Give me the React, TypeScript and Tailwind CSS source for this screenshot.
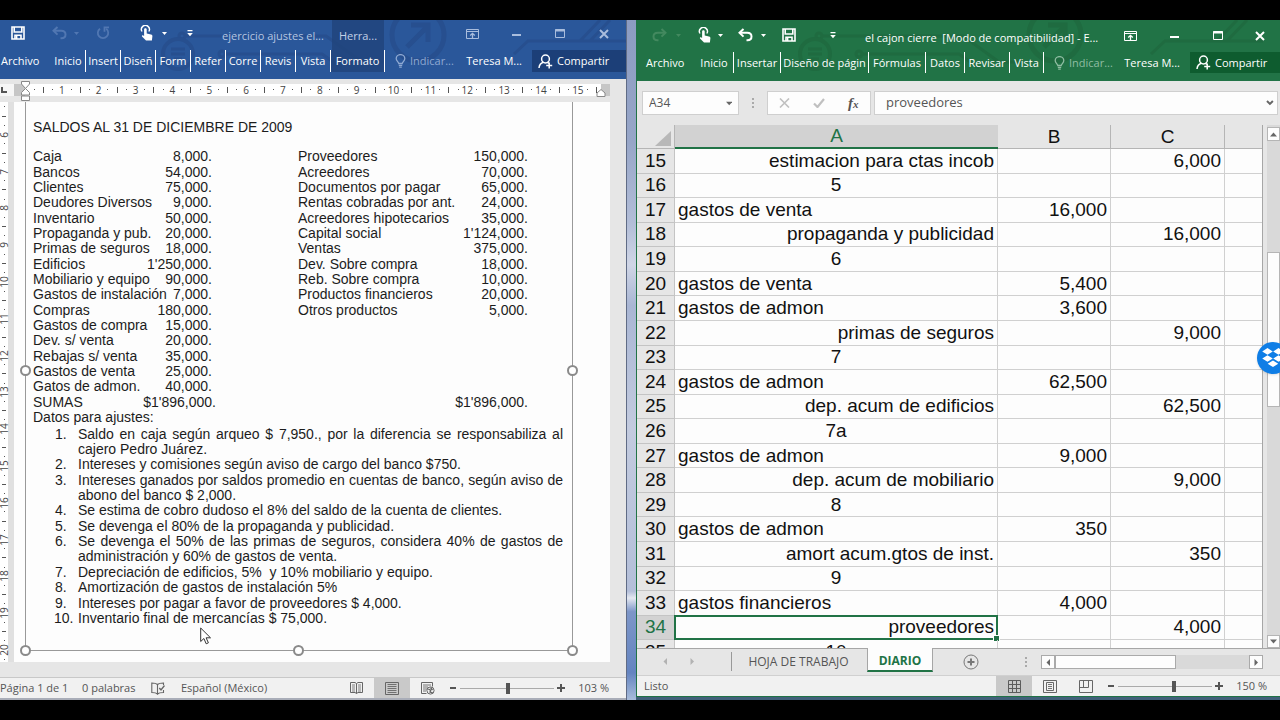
import type { ReactNode } from 'react';

/* ---------- icons ---------- */

const SaveIcon = () => (
  <svg width="14" height="14" viewBox="0 0 14 14" fill="none" stroke="currentColor" strokeWidth="1.6">
    <path d="M1 1h12v12H1z" />
    <path d="M3.2 1v5h7.6V1" />
    <path d="M4 13V9.2h6V13" />
    <path d="M5.6 10v3" />
  </svg>
);

const UndoIcon = ({ flip = false }: { flip?: boolean }) => (
  <svg width="15" height="14" viewBox="0 0 15 14" fill="none" stroke="currentColor" strokeWidth="2" className={flip ? '-scale-x-100' : ''}>
    <path d="M5.5 1L1.5 4.8l4 3.8" />
    <path d="M2 4.8h7.2c2.600 0 4.300 1.500 4.300 3.700S11.800 12.200 9.500 12.200H8.500" />
  </svg>
);

const RepeatIcon = () => (
  <svg width="14" height="14" viewBox="0 0 14 14" fill="none" stroke="currentColor" strokeWidth="1.8">
    <path d="M4 2.700A5.200 5.200 0 1 0 10.200 2.800" />
    <path d="M8.500 5.800V1.300H13" />
  </svg>
);

const TouchIcon = () => (
  <svg width="14" height="16" viewBox="0 0 14 16" fill="none">
    <path d="M2 6.500A4 4 0 1 1 8.800 6.500" stroke="currentColor" strokeWidth="1.400" />
    <path d="M4.100 4.500c0-1.700 2.600-1.700 2.600 0v4l4.300.9c1 .2 1.500.8 1.400 1.800l-.5 4.300H6L2 11.500c-.5-.9.500-1.700 1.300-1.100l.8.700z" fill="currentColor" />
  </svg>
);

const Caret = () => (
  <svg width="5" height="3" viewBox="0 0 5 3" fill="currentColor"><path d="M0 0h5L2.500 3z" /></svg>
);

const CustomizeIcon = () => (
  <svg width="6" height="7" viewBox="0 0 6 7" fill="currentColor"><path d="M.5 0h5v1.200h-5zM.2 3h5.600L3 6.300z" /></svg>
);

const RibbonIcon = () => (
  <svg width="13" height="10" viewBox="0 0 13 10" fill="none" stroke="currentColor">
    <path d="M.5.5h12v9H.5z M.5 2.500h12" />
    <path d="M6.500 9V4.500M4.200 6.500l2.300-2.200 2.300 2.200" strokeWidth="1.300" />
  </svg>
);

const MinimizeIcon = () => (
  <svg width="9" height="9" viewBox="0 0 9 9" fill="currentColor"><path d="M0 5h9v2H0z" /></svg>
);

const MaximizeIcon = () => (
  <svg width="10" height="9" viewBox="0 0 10 9" fill="none" stroke="currentColor">
    <path d="M.5.5h9v8h-9z" /><path d="M0 1.500h10" strokeWidth="2" />
  </svg>
);

const CloseIcon = () => (
  <svg width="10" height="10" viewBox="0 0 10 10" fill="none" stroke="currentColor" strokeWidth="2"><path d="M1 1l8 8M9 1L1 9" /></svg>
);

const BulbIcon = () => (
  <svg width="11" height="14" viewBox="0 0 11 14" fill="none" stroke="currentColor" strokeWidth="1.300">
    <path d="M3.800 9.500C3.600 7.800 1.200 7 1.200 4.600a4.300 4 0 0 1 8.600 0c0 2.400-2.400 3.200-2.600 4.900z" />
    <path d="M3.800 11.300h3.400M4.200 13.200h2.600" />
  </svg>
);

const ShareIcon = () => (
  <svg width="15" height="15" viewBox="0 0 15 15" fill="none" stroke="currentColor" strokeWidth="1.500">
    <circle cx="7.500" cy="5" r="3.900" />
    <path d="M1 14c.3-3 2-5 4.300-5.700M9.500 8.300l1.500 1" />
    <path d="M11.200 8.500v6M8.200 11.500h6" />
  </svg>
);

const ProofIcon = () => (
  <svg width="14" height="13" viewBox="0 0 14 13" fill="none" stroke="#666" strokeWidth="1.100">
    <path d="M6.500 2.500C5 1 3 1 .8 1v9.500c2.200 0 4.200 0 5.700 1.500V2.500C7.500 1.500 9 1 12.500 1v2M6.500 12c1.200-1.200 3-1.500 6-1.500V8" />
    <path d="M8.300 6l1.700 2 3.500-4.500" strokeWidth="1.400" />
  </svg>
);

const ReadIcon = () => (
  <svg width="13" height="12" viewBox="0 0 13 12" fill="none" stroke="#666">
    <path d="M.5.5h4.500l1.500 1 1.500-1h4.500v10H8l-1.500 1-1.500-1H.5zM6.500 1.500v10" />
    <path d="M2 3h3M2 5h3M2 7h3M2 9h3M8 3h3M8 5h3M8 7h3M8 9h3" strokeWidth=".8" />
  </svg>
);

const PrintLayoutIcon = () => (
  <svg width="14" height="13" viewBox="0 0 14 13" fill="none" stroke="#666">
    <path d="M.5.500h13v12H.5z" />
    <path d="M2.500 2.500h9M2.500 4.500h9M2.500 6.500h9M2.500 8.500h9M2.500 10.500h9" strokeWidth=".9" />
  </svg>
);

const WebIcon = () => (
  <svg width="14" height="13" viewBox="0 0 14 13" fill="none" stroke="#666">
    <path d="M5.500 11.500H.5V.5h11v4" /><path d="M2 3h8M2 5h5M2 7h4M2 9h3" strokeWidth=".9" />
    <circle cx="9.500" cy="8.500" r="3.600" fill="#f1f1f1" /><path d="M7.200 7l2.500 1.200L9 10l2.800.8M9.500 5.500L11.500 8" strokeWidth="1.300" />
  </svg>
);

const GridIcon = () => (
  <svg width="13" height="13" viewBox="0 0 13 13" fill="none" stroke="#5c5c5c">
    <path d="M.5.500h12v12H.5zM.5 4.500h12M.5 8.500h12M4.500.5v12M8.500.5v12" />
  </svg>
);

const PageViewIcon = () => (
  <svg width="14" height="13" viewBox="0 0 14 13" fill="none" stroke="#666">
    <path d="M.5.500h13v12H.5zM3.500 2.500h7v8h-7z" /><path d="M5 4.500h4M5 6.500h4M5 8.500h4" strokeWidth=".9" />
  </svg>
);

const BreakViewIcon = () => (
  <svg width="14" height="13" viewBox="0 0 14 13" fill="none" stroke="#666">
    <path d="M.5.500h13v12H.5zM4.500.5v7M9.500.5v7M.5 7.500h9" />
  </svg>
);

const Circuit = ({ color }: { color: string }) => (
  <svg className="pointer-events-none absolute top-0 left-0" width="626" height="59" viewBox="0 0 626 59" fill="none" stroke={color} strokeWidth="3">
    <g transform="translate(23 1)">
      <circle cx="159" cy="15" r="3" />
      <path d="M163 15h140l36 26h22" />
      <circle cx="176" cy="33" r="0" />
    </g>
    <circle cx="200" cy="34" r="15" strokeWidth="4" className="hidden" />
    <circle cx="178" cy="34" r="15" strokeWidth="4" />
    <path d="M171 29h14M171 34h14M174 39h8" />
    <circle cx="222" cy="34" r="3" />
    <path d="M226 34h96l20 14" />
    <circle cx="418" cy="15" r="26" strokeWidth="5" />
    <path d="M407 27l20-20M411 5h17v17" strokeWidth="5" />
    <path d="M514 34l14-13h98M580 21l20-21M590 21l20-21" />
  </svg>
);

/* ---------- shared pieces ---------- */

function IconButton({ label, className, children }: { label: string; className: string; children: ReactNode }) {
  return (
    <button type="button" aria-label={label} className={`flex shrink-0 items-center justify-center ${className}`}>
      {children}
    </button>
  );
}

function Tab({ className, children }: { className: string; children: ReactNode }) {
  return (
    <button type="button" className={`flex shrink-0 items-center justify-center border-r border-white whitespace-nowrap ${className}`}>
      {children}
    </button>
  );
}

function Zoom({ label, value, text }: { label: string; value: number; text: string }) {
  return (
    <>
      <button type="button" aria-label="Alejar" className="flex h-full w-3.5 items-center justify-center">
        <span className="h-0.5 w-1.5 bg-[#555]" />
      </button>
      <input
        type="range"
        aria-label={label}
        defaultValue={value}
        className="h-3 w-[94px] appearance-none bg-[linear-gradient(#aaa,#aaa)] bg-[length:100%_1px] bg-center bg-no-repeat [&::-webkit-slider-thumb]:h-[11px] [&::-webkit-slider-thumb]:w-1 [&::-webkit-slider-thumb]:appearance-none [&::-webkit-slider-thumb]:bg-[#555]"
      />
      <button type="button" aria-label="Acercar" className="flex h-full w-3.5 items-center justify-center">
        <svg width="8" height="8" viewBox="0 0 8 8" stroke="#555" strokeWidth="2"><path d="M4 0v8M0 4h8" /></svg>
      </button>
      <span className="ml-2.5 whitespace-nowrap">{text}</span>
    </>
  );
}

/* ---------- word window ---------- */

const ledger: [string, string, string, string][] = [
  ['Caja', '8,000.', 'Proveedores', '150,000.'],
  ['Bancos', '54,000.', 'Acreedores', '70,000.'],
  ['Clientes', '75,000.', 'Documentos por pagar', '65,000.'],
  ['Deudores Diversos', '9,000.', 'Rentas cobradas por ant.', '24,000.'],
  ['Inventario', '50,000.', 'Acreedores hipotecarios', '35,000.'],
  ['Propaganda y pub.', '20,000.', 'Capital social', "1'124,000."],
  ['Primas de seguros', '18,000.', 'Ventas', '375,000.'],
  ['Edificios', "1'250,000.", 'Dev. Sobre compra', '18,000.'],
  ['Mobiliario y equipo', '90,000.', 'Reb. Sobre compra', '10,000.'],
  ['Gastos de instalación', '7,000.', 'Productos financieros', '20,000.'],
  ['Compras', '180,000.', 'Otros productos', '5,000.'],
  ['Gastos de compra', '15,000.', '', ''],
  ['Dev. s/ venta', '20,000.', '', ''],
  ['Rebajas s/ venta', '35,000.', '', ''],
  ['Gastos de venta', '25,000.', '', ''],
  ['Gatos de admon.', '40,000.', '', ''],
  ['SUMAS', "$1'896,000.", '', "$1'896,000."],
];

const adjustments: string[][] = [
  ['Saldo en caja según arqueo $ 7,950., por la diferencia se responsabiliza al', 'cajero Pedro Juárez.'],
  ['Intereses y comisiones según aviso de cargo del banco $750.'],
  ['Intereses ganados por saldos promedio en cuentas de banco, según aviso de', 'abono del banco $ 2,000.'],
  ['Se estima de cobro dudoso el 8% del saldo de la cuenta de clientes.'],
  ['Se devenga el 80% de la propaganda y publicidad.'],
  ['Se devenga el 50% de las primas de seguros, considera 40% de gastos de', 'administración y 60% de gastos de venta.'],
  ['Depreciación de edificios, 5%  y 10% mobiliario y equipo.'],
  ['Amortización de gastos de instalación 5%'],
  ['Intereses por pagar a favor de proveedores $ 4,000.'],
  ['Inventario final de mercancías $ 75,000.'],
];

const wordTabs = ['Inicio', 'Insert', 'Diseñ', 'Form', 'Refer', 'Corre', 'Revis', 'Vista'];
const marks = Array.from({ length: 15 }, (_, i) => i + 1);

const Dot = () => <span className="size-px bg-[#555]" />;

function Handle({ className }: { className: string }) {
  return <span className={`absolute size-[11px] rounded-full border-2 border-[#8a8a8a] bg-white ${className}`} />;
}

function WordWindow() {
  return (
    <section className="flex min-w-0 flex-col overflow-hidden border-b-2 border-[#a9adb8] bg-[#e6e6e6]">
      <header className="relative overflow-hidden bg-[#2a579a] pb-[7px] text-[11px] text-white">
        <Circuit color="#274f8f" />
        <div className="relative flex h-[30px]">
          <div className="flex h-[26px] items-center">
            <IconButton label="Guardar" className="w-9"><SaveIcon /></IconButton>
            <IconButton label="Deshacer" className="ml-[11px] w-6 text-[#5177b2]"><UndoIcon /></IconButton>
            <IconButton label="Más deshacer" className="w-2.5 text-[#5177b2]"><Caret /></IconButton>
            <IconButton label="Repetir" className="ml-2.5 w-6 text-[#5177b2]"><RepeatIcon /></IconButton>
            <IconButton label="Modo táctil" className="ml-5 w-6"><TouchIcon /></IconButton>
            <IconButton label="Más modos" className="w-2.5"><Caret /></IconButton>
            <IconButton label="Personalizar" className="ml-[13px] w-4"><CustomizeIcon /></IconButton>
          </div>
          <h1 className="ml-6 w-[110px] shrink-0 pt-2 leading-4 whitespace-nowrap text-[#b4c6e2]">ejercicio ajustes el...</h1>
          <div className="w-[52px] shrink-0 bg-[#20437a]/80 pt-2 text-center leading-4 text-[#c3d0e6]">Herra...</div>
          <div className="ml-auto flex h-[27px] text-[#a9bddd]">
            <IconButton label="Opciones de cinta" className="w-11"><RibbonIcon /></IconButton>
            <IconButton label="Minimizar" className="w-11"><MinimizeIcon /></IconButton>
            <IconButton label="Maximizar" className="w-11"><MaximizeIcon /></IconButton>
            <IconButton label="Cerrar" className="w-11"><CloseIcon /></IconButton>
          </div>
        </div>
        <nav className="relative flex h-[22px] leading-[22px]">
          <button type="button" className="w-[51px] shrink-0 pr-2.5 pl-px text-left">Archivo</button>
          {wordTabs.map((t) => (
            <Tab key={t} className="w-[35px]">{t}</Tab>
          ))}
          <Tab className="w-[54px] bg-[#20437a]/80">Formato</Tab>
          <button type="button" className="ml-2.5 flex shrink-0 items-center gap-1 text-[#8ea9d2]"><BulbIcon />Indicar...</button>
          <button type="button" className="ml-auto shrink-0 pr-2.5">Teresa M...</button>
          <button type="button" className="flex w-[94px] shrink-0 items-center gap-1 bg-[#1c3f78] pl-1.5 font-medium"><ShareIcon />Compartir</button>
        </nav>
      </header>

      <div className="relative flex h-[23px] items-center pb-0.5 text-[10px] text-[#444]">
        <span className="flex h-3 w-[14px] items-center bg-[#f6f6f6] pl-px">
          <svg width="6" height="6" viewBox="0 0 6 6" fill="none" stroke="#555" strokeWidth="2"><path d="M1 0v5h5" /></svg>
        </span>
        <span className="h-3 w-[11px] bg-[#c6c6c6]" />
        <div className="flex h-3 min-w-0 flex-1 bg-white pl-[5px]">
          <div className="grid w-[18px] grid-cols-2 place-items-center"><Dot /><span className="h-1.5 w-px bg-[#555]" /></div>
          <div className="flex min-w-0 flex-1">
            {marks.map((n) => (
              <div key={n} className="grid min-w-0 flex-1 grid-cols-4 place-items-center leading-3">
                <Dot /><span className="flex w-0 justify-center">{n}</span><Dot /><span className="h-1.5 w-px bg-[#555]" />
              </div>
            ))}
          </div>
        </div>
        <span className="mr-4 h-3 w-[9px] bg-[#c6c6c6]" />
        <svg className="absolute top-0.5 left-5 z-10" width="11" height="21" viewBox="0 0 11 21" fill="#fff" stroke="#888">
          <path d="M1.500.5h8v2.500l-4 4.500-4-4.500z" /><path d="M5.500 7.500l4 4v2.500h-8v-2.500z" /><path d="M1.500 15h8v4.500h-8z" />
        </svg>
        <svg className="absolute top-2.5 right-5" width="10" height="8" viewBox="0 0 10 8" fill="#fff" stroke="#888"><path d="M5 .5l4 3.500v3.500H1V4z" /></svg>
      </div>

      <div className="flex">
        <div className="h-0 min-h-full w-[14px] shrink-0 overflow-hidden bg-[#e0e0e0] text-[10px] text-[#444]">
          <div className="flex w-2 flex-col bg-white">
            <div className="grid h-[19px] grid-rows-2 place-items-center"><Dot /><span className="h-px w-1 bg-[#555]" /></div>
            <div className="flex h-[552px] flex-col">
              {marks.map((n) => (
                <div key={n} className="grid min-h-0 flex-1 grid-rows-4 place-items-center">
                  <Dot /><span className="flex size-0 -rotate-90 items-center justify-center">{n + 5}</span><Dot /><span className="h-px w-1 bg-[#555]" />
                </div>
              ))}
            </div>
          </div>
        </div>

        <article className="mr-4 min-w-0 flex-1 bg-[#fdfdfd] pr-[37px] pb-[11px] pl-[11px] font-['Liberation_Sans',Arial,sans-serif] text-[14px] leading-[15px] text-[#1c1c1c]">
          <div className="relative border-x border-b border-[#999] pt-[18px] pr-[9px] pb-6 pl-[7px]">
            <h2>SALDOS AL 31 DE DICIEMBRE DE 2009</h2>
            <table className="mt-3.5 h-[261px] table-fixed whitespace-nowrap">
              <colgroup>
                <col className="w-[110px]" /><col className="w-[69px]" /><col className="w-[243px]" /><col className="w-[70px]" />
              </colgroup>
              <tbody>
                {ledger.map(([a, b, c, d]) => (
                  <tr key={a}>
                    <td className="max-w-[110px] p-0">{a}</td>
                    <td className="p-0 text-right">
                      <span className={a === 'SUMAS' ? '-mr-1' : ''}>{b}</span>
                    </td>
                    <td className="p-0 pl-[86px]">{c}</td>
                    <td className="p-0 text-right">{d}</td>
                  </tr>
                ))}
              </tbody>
            </table>
            <p>Datos para ajustes:</p>
            <ol className="mt-0.5 flex h-[199px] flex-col justify-between pl-[21px]">
              {adjustments.map((lines, i) => (
                <li key={lines[0]} className="flex">
                  <span className={i === 9 ? 'w-6 shrink-0' : 'w-6 shrink-0 pl-px'}>{i + 1}.</span>
                  <div className="min-w-0 flex-1">
                    {lines.map((l, k) => (
                      <span key={l} className={lines.length > 1 && k === 0 ? 'block [text-align-last:justify]' : 'block whitespace-pre'}>{l}</span>
                    ))}
                  </div>
                </li>
              ))}
            </ol>
            <Handle className="top-[263px] -left-1.5" />
            <Handle className="top-[263px] -right-1.5" />
            <Handle className="-bottom-1.5 -left-1.5" />
            <Handle className="-bottom-1.5 left-[calc(50%-6px)]" />
            <Handle className="-right-1.5 -bottom-1.5" />
            <svg className="absolute bottom-[5px] left-[174px]" width="12" height="18" viewBox="0 0 12 18" fill="#fff" stroke="#333">
              <path d="M.7 1v13.500l3.200-3 2.300 5.300 2.200-1-2.300-5h4.400z" />
            </svg>
          </div>
        </article>
      </div>

      <footer className="mt-auto flex h-[21px] items-center border-t border-[#c8c8c8] bg-[#f1f1f1] text-[11px] whitespace-nowrap text-[#555]">
        <span className="w-[82px]">Página 1 de 1</span>
        <span className="w-[69px]">0 palabras</span>
        <button type="button" aria-label="Revisión" className="w-[30px]"><ProofIcon /></button>
        <span>Español (México)</span>
        <div className="ml-auto flex h-full items-center pr-[17px]">
          <IconButton label="Modo de lectura" className="h-full w-9"><ReadIcon /></IconButton>
          <IconButton label="Diseño de impresión" className="h-full w-9 bg-[#c9c9c9]"><PrintLayoutIcon /></IconButton>
          <IconButton label="Diseño web" className="h-full w-9"><WebIcon /></IconButton>
          <Zoom label="Zoom del documento" value={51} text="103 %" />
        </div>
      </footer>
    </section>
  );
}

/* ---------- excel window ---------- */

type Row = { n: number; a: string; align: 'l' | 'c' | 'r'; b?: string; c?: string };
const rows: Row[] = [
  { n: 15, a: 'estimacion para ctas incob', align: 'r', c: '6,000' },
  { n: 16, a: '5', align: 'c' },
  { n: 17, a: 'gastos de venta', align: 'l', b: '16,000' },
  { n: 18, a: 'propaganda y publicidad', align: 'r', c: '16,000' },
  { n: 19, a: '6', align: 'c' },
  { n: 20, a: 'gastos de venta', align: 'l', b: '5,400' },
  { n: 21, a: 'gastos de admon', align: 'l', b: '3,600' },
  { n: 22, a: 'primas de seguros', align: 'r', c: '9,000' },
  { n: 23, a: '7', align: 'c' },
  { n: 24, a: 'gastos de admon', align: 'l', b: '62,500' },
  { n: 25, a: 'dep. acum de edificios', align: 'r', c: '62,500' },
  { n: 26, a: '7a', align: 'c' },
  { n: 27, a: 'gastos de admon', align: 'l', b: '9,000' },
  { n: 28, a: 'dep. acum de mobiliario', align: 'r', c: '9,000' },
  { n: 29, a: '8', align: 'c' },
  { n: 30, a: 'gastos de admon', align: 'l', b: '350' },
  { n: 31, a: 'amort acum.gtos de inst.', align: 'r', c: '350' },
  { n: 32, a: '9', align: 'c' },
  { n: 33, a: 'gastos financieros', align: 'l', b: '4,000' },
  { n: 34, a: 'proveedores', align: 'r', c: '4,000' },
  { n: 35, a: '10', align: 'c' },
];
const aligns = { l: 'text-left', c: 'text-center', r: 'text-right' };

function Arrow({ d }: { d: string }) {
  return <svg width="7" height="7" viewBox="0 0 7 7" fill="#666"><path d={d} /></svg>;
}

function Grip() {
  return (
    <>
      <i className="size-0.5 bg-[#aaa]" />
      <i className="size-0.5 bg-[#aaa]" />
      <i className="size-0.5 bg-[#aaa]" />
    </>
  );
}

function ExcelWindow() {
  const cell = 'border-r border-b border-[#d0d0d0] px-[3px] py-0';
  return (
    <section className="relative mb-[3px] flex min-w-0 flex-col overflow-hidden border-b border-l border-[#217346] bg-[#e6e6e6]">
      <header className="relative overflow-hidden bg-[#217346] pb-2 text-[11px] text-white">
        <Circuit color="#1f6b40" />
        <div className="relative flex h-8">
          <div className="flex h-[30px] items-center">
            <IconButton label="Rehacer" className="ml-2.5 w-6 text-[#43895f]"><UndoIcon flip /></IconButton>
            <IconButton label="Más rehacer" className="ml-0.5 w-2.5 text-[#43895f]"><Caret /></IconButton>
            <IconButton label="Modo táctil" className="ml-3 w-5"><TouchIcon /></IconButton>
            <IconButton label="Más modos" className="w-2.5"><Caret /></IconButton>
            <IconButton label="Deshacer" className="ml-2.5 w-5"><UndoIcon /></IconButton>
            <IconButton label="Más deshacer" className="ml-[3px] w-2.5"><Caret /></IconButton>
            <IconButton label="Guardar" className="ml-[11px] w-5"><SaveIcon /></IconButton>
            <IconButton label="Personalizar" className="ml-[26px] w-4"><CustomizeIcon /></IconButton>
          </div>
          <h1 className="ml-6 pt-2.5 leading-4 whitespace-pre">el cajon cierre  [Modo de compatibilidad] - E...</h1>
          <div className="ml-auto flex h-[31px]">
            <IconButton label="Opciones de cinta" className="w-11"><RibbonIcon /></IconButton>
            <IconButton label="Minimizar" className="w-11"><MinimizeIcon /></IconButton>
            <IconButton label="Maximizar" className="w-11"><MaximizeIcon /></IconButton>
            <IconButton label="Cerrar" className="w-10"><CloseIcon /></IconButton>
          </div>
        </div>
        <nav className="relative flex h-[21px] leading-[22px]">
          <button type="button" className="w-[58px] shrink-0 pl-[9px] text-left">Archivo</button>
          <Tab className="w-[39px]">Inicio</Tab>
          <Tab className="w-[47px]">Insertar</Tab>
          <Tab className="w-[88px]">Diseño de págin</Tab>
          <Tab className="w-[57px]">Fórmulas</Tab>
          <Tab className="w-[39px]">Datos</Tab>
          <Tab className="w-[45px]">Revisar</Tab>
          <Tab className="w-[34px]">Vista</Tab>
          <button type="button" className="ml-2.5 flex shrink-0 items-center gap-1 text-[#8fbda2]"><BulbIcon />Indicar...</button>
          <button type="button" className="ml-auto shrink-0 pr-2.5">Teresa M...</button>
          <button type="button" className="flex w-[90px] shrink-0 items-center gap-1 bg-[#0e5c2f] pl-1.5 font-medium"><ShareIcon />Compartir</button>
        </nav>
      </header>

      <div className="flex h-11 items-start pt-2.5 pr-0.5 pl-[5px] text-[13px] text-[#555]">
        <div className="flex h-6 w-[97px] shrink-0 items-center border border-[#cfcfcf] bg-[#fdfdfd] pr-1.5">
          <input aria-label="Cuadro de nombres" defaultValue="A34" className="w-full min-w-0 bg-transparent pl-1.5 text-[12px]" />
          <Arrow d="M0 1.500h7L3.500 5.500z" />
        </div>
        <span className="flex h-6 w-[28px] shrink-0 flex-col items-center justify-center gap-0.5"><Grip /></span>
        <div className="flex h-6 w-[104px] shrink-0 items-center justify-around border border-[#cfcfcf] bg-[#fdfdfd]">
          <button type="button" aria-label="Cancelar"><svg width="11" height="10" viewBox="0 0 11 10" stroke="#c0c0c0" strokeWidth="1.600"><path d="M1 .5l9 9M10 .5l-9 9" /></svg></button>
          <button type="button" aria-label="Aceptar"><svg width="12" height="10" viewBox="0 0 12 10" fill="none" stroke="#c0c0c0" strokeWidth="2.200"><path d="M1 5.500L4.500 9 11 1" /></svg></button>
          <button type="button" aria-label="Insertar función" className="font-['Liberation_Serif',serif] text-[15px] leading-4 font-bold italic">f<span className="text-[11px]">x</span></button>
        </div>
        <div className="ml-[3px] flex h-6 min-w-0 flex-1 items-center border border-[#cfcfcf] bg-[#fdfdfd] pr-[3px]">
          <input aria-label="Barra de fórmulas" defaultValue="proveedores" className="w-full min-w-0 bg-transparent pl-[11px]" />
          <svg width="8" height="6" viewBox="0 0 8 6" fill="none" stroke="#666" strokeWidth="2"><path d="M1 1l3 3 3-3" /></svg>
        </div>
      </div>

      <div className="flex min-h-0 flex-1 basis-0 overflow-hidden border-b border-[#a6a6a6]">
        <div className="min-w-0 flex-1 border-r border-[#a6a6a6]">
          <table className="h-[540px] w-full table-fixed border-separate border-spacing-0 bg-[#fdfdfd] font-['Liberation_Sans',Arial,sans-serif] text-[19px] leading-[22px] whitespace-nowrap text-[#111]">
            <colgroup>
              <col className="w-[38px]" /><col /><col className="w-[113px]" /><col className="w-[114px]" /><col className="w-[37px]" />
            </colgroup>
            <thead>
              <tr className="h-6 bg-[#e6e6e6]">
                <th className="border-r border-b border-[#b5b5b5] p-0">
                  <svg className="mt-1 mr-[3px] ml-auto" width="16" height="15" viewBox="0 0 16 15" fill="#b8b8b8"><path d="M16 0v15H0z" /></svg>
                </th>
                <th className="border-b-2 border-[#217346] bg-[#d2d2d2] p-0 font-normal text-[#217346]">A</th>
                <th className="border-r border-b border-[#b5b5b5] p-0 font-normal">B</th>
                <th className="border-r border-b border-[#b5b5b5] p-0 font-normal">C</th>
                <th aria-label="D" className="border-b border-[#b5b5b5] p-0" />
              </tr>
            </thead>
            <tbody>
              {rows.map((r) => (
                <tr key={r.n}>
                  <th className={`border-r border-b border-[#c4c4c4] p-0 font-normal ${r.n === 34 ? 'bg-[#d2d2d2] text-[#217346]' : 'bg-[#e6e6e6]'}`}>{r.n}</th>
                  <td className={`relative ${cell} ${aligns[r.align]}`}>
                    {r.a}
                    {r.n === 34 && (
                      <span className="absolute -inset-px border-2 border-[#217346]">
                        <i className="absolute -right-[3px] -bottom-[3px] size-[5px] bg-[#217346] outline outline-white" />
                      </span>
                    )}
                  </td>
                  <td className={`${cell} text-right`}>{r.b}</td>
                  <td className={`${cell} text-right`}>{r.c}</td>
                  <td className="border-b border-[#d0d0d0] p-0" />
                </tr>
              ))}
            </tbody>
          </table>
        </div>
        <div className="ml-1 flex w-[13px] shrink-0 flex-col bg-[#d9d9d9]">
          <button type="button" aria-label="Subir" className="mt-0.5 flex h-[14px] items-center justify-center border border-[#b5b5b5] bg-[#fdfdfd]"><Arrow d="M0 5.500h7L3.500 1.500z" /></button>
          <div className="mt-[111px] h-[155px] border border-[#b5b5b5] bg-[#fdfdfd]" />
          <button type="button" aria-label="Bajar" className="mt-auto flex h-[13px] items-center justify-center border border-[#b5b5b5] bg-[#fdfdfd]"><Arrow d="M0 1.500h7L3.500 5.500z" /></button>
        </div>
      </div>

      <div className="flex h-[26px] shrink-0 items-start text-[12px] text-[#555]">
        <IconButton label="Hoja anterior" className="ml-[22px] h-6 w-3 opacity-40"><Arrow d="M5 0v7L1.500 3.500z" /></IconButton>
        <IconButton label="Hoja siguiente" className="ml-[15px] h-6 w-3 opacity-40"><Arrow d="M1.500 0v7L5 3.500z" /></IconButton>
        <button type="button" className="mt-[3px] ml-[33px] h-[19px] w-[134px] shrink-0 border-l border-[#999] whitespace-nowrap">HOJA DE TRABAJO</button>
        <button type="button" className="-mt-px ml-0.5 h-6 w-[66px] shrink-0 border-x border-b-2 border-x-[#a6a6a6] border-b-[#217346] bg-[#fdfdfd] pt-1 font-bold text-[#217346]">DIARIO</button>
        <button type="button" aria-label="Hoja nueva" className="mt-[5px] ml-[30px]">
          <svg width="16" height="16" viewBox="0 0 16 16" fill="none" stroke="#777"><circle cx="8" cy="8" r="7" /><path d="M8 4.500v7M4.500 8h7" strokeWidth="2" /></svg>
        </button>
        <span className="mt-2 mr-[14px] ml-auto flex flex-col gap-0.5"><Grip /></span>
        <div className="mt-1.5 mr-[17px] flex h-[14px] w-[222px] shrink-0 bg-[#d9d9d9]">
          <button type="button" aria-label="Izquierda" className="flex w-[14px] items-center justify-center border border-[#aaa] bg-[#fdfdfd]"><Arrow d="M5 0v7L1.500 3.500z" /></button>
          <div className="w-[121px] border border-[#aaa] bg-[#fdfdfd]" />
          <button type="button" aria-label="Derecha" className="ml-auto flex w-[14px] items-center justify-center border border-[#aaa] bg-[#fdfdfd]"><Arrow d="M1.500 0v7L5 3.500z" /></button>
        </div>
      </div>

      <footer className="flex h-[21px] shrink-0 items-center border-t border-[#d0d0d0] bg-[#f1f1f1] pl-[7px] text-[11px] text-[#555]">
        <span>Listo</span>
        <div className="ml-auto flex h-full items-center pr-[13px]">
          <IconButton label="Normal" className="h-full w-9 bg-[#c9c9c9]"><GridIcon /></IconButton>
          <IconButton label="Diseño de página" className="h-full w-9"><PageViewIcon /></IconButton>
          <IconButton label="Salto de página" className="h-full w-9"><BreakViewIcon /></IconButton>
          <Zoom label="Zoom de la hoja" value={60} text="150 %" />
        </div>
      </footer>

      <button type="button" aria-label="Dropbox" className="absolute top-[322px] -right-[9px] flex size-8 items-center justify-center rounded-full bg-[#0f7ee6] shadow">
        <svg width="22" height="20" viewBox="0 0 20 18" fill="#fff">
          <path d="M5 0l4.800 3L5 6 .2 3zM15 0l4.800 3L15 6l-4.800-3zM5 6.500l4.800 3-4.800 3-4.800-3zM15 6.500l4.800 3-4.800 3-4.800-3zM10 11.200l4.800 3-4.800 3-4.800-3z" />
        </svg>
      </button>
    </section>
  );
}

export default function App() {
  return (
    <main className="flex min-h-screen flex-col bg-black py-5 font-['Open_Sans','Noto_Sans',sans-serif]">
      <div className="grid flex-1 grid-cols-[minmax(0,626fr)_10px_minmax(0,644fr)] bg-[#41607a]">
        <WordWindow />
        <div className="border-l border-[#5f6b85] bg-[linear-gradient(#8c9cc2,#97a6c8_18%,#b3bed8_30%,#d0d6e6_36%,#a9b6d4_42%,#c3cbdf_60%,#b4bfd9_84%,#e4e8f0_85%,#7d96c8_87%,#6484c0_96%,#a9bddb)]" />
        <ExcelWindow />
      </div>
    </main>
  );
}
